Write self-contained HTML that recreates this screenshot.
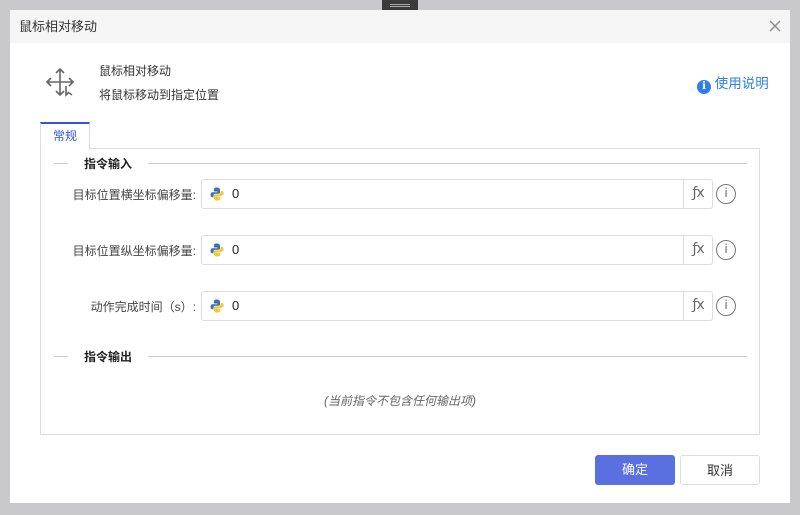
<!DOCTYPE html>
<html><head><meta charset="utf-8"><style>
*{margin:0;padding:0;box-sizing:border-box}
body{width:800px;height:515px;background:#c9c9cb;font-family:"Liberation Sans","Noto Sans CJK SC",sans-serif;position:relative;overflow:hidden;color:#333}
.dlg{position:absolute;left:10px;top:10px;width:780px;height:493px;background:#fff}
.hd{height:33px;background:#f5f5f5;font-size:13px;line-height:33px;padding-left:9px;color:#333}
.x{position:absolute;right:8px;top:9px;width:14px;height:14px}
.abs{position:absolute}
.lbl{position:absolute;font-size:12px;color:#444;text-align:right;width:186px;left:0}
.inp{position:absolute;left:191px;width:512px;height:30px;border:1px solid #ddd;border-radius:3px}
.fx{position:absolute;right:0;top:0;width:29px;height:28px;border-left:1px solid #ddd;font-family:"DejaVu Sans",sans-serif;font-size:14px;color:#666;text-align:center;line-height:27px;letter-spacing:-1px}
.zero{position:absolute;left:30px;top:6px;font-size:13px;color:#222}
.py{position:absolute;left:8px;top:7px}
.info{position:absolute;left:706px;width:20px;height:20px;border:1.5px solid #777;border-radius:50%;font-family:"DejaVu Sans",sans-serif;font-size:12px;color:#666;text-align:center;line-height:17px}
.sec{position:absolute;left:44px;width:693px;height:14px}
.sec .l1{position:absolute;left:0;top:7px;width:14px;border-top:1px solid #ccc}
.sec .t{position:absolute;left:30px;top:-1px;font-size:12px;font-weight:bold;color:#222}
.sec .l2{position:absolute;left:94px;right:0;top:7px;border-top:1px solid #ccc}
.btn{position:absolute;top:445px;width:80px;height:30px;border-radius:3px;font-size:13px;text-align:center;line-height:29px}
</style></head><body>
<div class="abs" style="left:382px;top:0;width:36px;height:12px;background:#3a3a3a"><div style="margin:4px 8px;border-top:1px solid #aaa;border-bottom:1px solid #aaa;height:3px"></div></div>
<div class="dlg">
<div class="hd">鼠标相对移动</div>
<svg class="x" viewBox="0 0 14 14"><path d="M2 2L12 12M12 2L2 12" stroke="#888" stroke-width="1.3"/></svg>
<svg class="abs" style="left:34px;top:56px" width="32" height="32" viewBox="0 0 32 32" fill="none" stroke="#666" stroke-width="1.6"><path d="M16 3V29M3 16H29M12 7L16 3L20 7M12 25L16 29L20 25M7 12L3 16L7 20M25 12L29 16L25 20"/><path d="M22 20L22 29L24.5 26.5L28 29" fill="#fff"/></svg>
<div class="abs" style="left:89px;top:52px;font-size:12px;color:#333">鼠标相对移动</div>
<div class="abs" style="left:89px;top:76px;font-size:12px;color:#333">将鼠标移动到指定位置</div>
<div class="abs" style="left:687px;top:62px;font-size:13.5px;color:#2f80e6"><span style="display:inline-block;width:14px;height:14px;border-radius:50%;background:#2f80e6;color:#fff;font-size:10px;font-weight:bold;text-align:center;line-height:14px;vertical-align:-1px;font-family:'DejaVu Serif',serif">i</span> 使用说明</div>
<div class="abs" style="left:30px;top:138px;width:720px;height:287px;border:1px solid #ddd"></div>
<div class="abs" style="left:30px;top:112px;width:50px;height:28px;background:#fff;border:1px solid #ddd;border-top:2px solid #3355dd;border-bottom:none;font-size:12px;color:#3355dd;text-align:center;line-height:24px">常规</div>
<div class="sec" style="top:146px"><div class="l1"></div><div class="t">指令输入</div><div class="l2"></div></div>
<div class="lbl" style="top:176px">目标位置横坐标偏移量:</div>
<div class="inp" style="top:169px"><svg class="py" width="14" height="14" viewBox="0 0 14 14"><path d="M7 0.5C4 0.5 4 1.5 4 3V4.5H7.3V5.2H2.5C1 5.2 0.5 6.5 0.5 7.8C0.5 9.3 1.2 10.3 2.5 10.3H3.5V8.5C3.5 7.4 4.4 6.7 5.4 6.7H8.6C9.5 6.7 10 6 10 5.2V2.8C10 1.3 8.6 0.5 7 0.5Z" fill="#3b73a8"/><path d="M7 13.5C10 13.5 10 12.5 10 11V9.5H6.7V8.8H11.5C13 8.8 13.5 7.5 13.5 6.2C13.5 4.7 12.8 3.7 11.5 3.7H10.5V5.5C10.5 6.6 9.6 7.3 8.6 7.3H5.4C4.5 7.3 4 8 4 8.8V11.2C4 12.7 5.4 13.5 7 13.5Z" fill="#f5c933"/></svg><span class="zero">0</span><div class="fx">ƒx</div></div>
<div class="info" style="top:174px">i</div>
<div class="lbl" style="top:232px">目标位置纵坐标偏移量:</div>
<div class="inp" style="top:225px"><svg class="py" width="14" height="14" viewBox="0 0 14 14"><path d="M7 0.5C4 0.5 4 1.5 4 3V4.5H7.3V5.2H2.5C1 5.2 0.5 6.5 0.5 7.8C0.5 9.3 1.2 10.3 2.5 10.3H3.5V8.5C3.5 7.4 4.4 6.7 5.4 6.7H8.6C9.5 6.7 10 6 10 5.2V2.8C10 1.3 8.6 0.5 7 0.5Z" fill="#3b73a8"/><path d="M7 13.5C10 13.5 10 12.5 10 11V9.5H6.7V8.8H11.5C13 8.8 13.5 7.5 13.5 6.2C13.5 4.7 12.8 3.7 11.5 3.7H10.5V5.5C10.5 6.6 9.6 7.3 8.6 7.3H5.4C4.5 7.3 4 8 4 8.8V11.2C4 12.7 5.4 13.5 7 13.5Z" fill="#f5c933"/></svg><span class="zero">0</span><div class="fx">ƒx</div></div>
<div class="info" style="top:230px">i</div>
<div class="lbl" style="top:288px">动作完成时间（s）:</div>
<div class="inp" style="top:281px"><svg class="py" width="14" height="14" viewBox="0 0 14 14"><path d="M7 0.5C4 0.5 4 1.5 4 3V4.5H7.3V5.2H2.5C1 5.2 0.5 6.5 0.5 7.8C0.5 9.3 1.2 10.3 2.5 10.3H3.5V8.5C3.5 7.4 4.4 6.7 5.4 6.7H8.6C9.5 6.7 10 6 10 5.2V2.8C10 1.3 8.6 0.5 7 0.5Z" fill="#3b73a8"/><path d="M7 13.5C10 13.5 10 12.5 10 11V9.5H6.7V8.8H11.5C13 8.8 13.5 7.5 13.5 6.2C13.5 4.7 12.8 3.7 11.5 3.7H10.5V5.5C10.5 6.6 9.6 7.3 8.6 7.3H5.4C4.5 7.3 4 8 4 8.8V11.2C4 12.7 5.4 13.5 7 13.5Z" fill="#f5c933"/></svg><span class="zero">0</span><div class="fx">ƒx</div></div>
<div class="info" style="top:286px">i</div>
<div class="sec" style="top:339px"><div class="l1"></div><div class="t">指令输出</div><div class="l2"></div></div>
<div class="abs" style="left:30px;width:720px;top:382px;text-align:center;font-size:12px;font-style:italic;color:#666">(当前指令不包含任何输出项)</div>
<div class="btn" style="left:585px;background:#5a6fe0;color:#fff">确定</div>
<div class="btn" style="left:670px;border:1px solid #ddd;color:#333">取消</div>
</div>
</body></html>
